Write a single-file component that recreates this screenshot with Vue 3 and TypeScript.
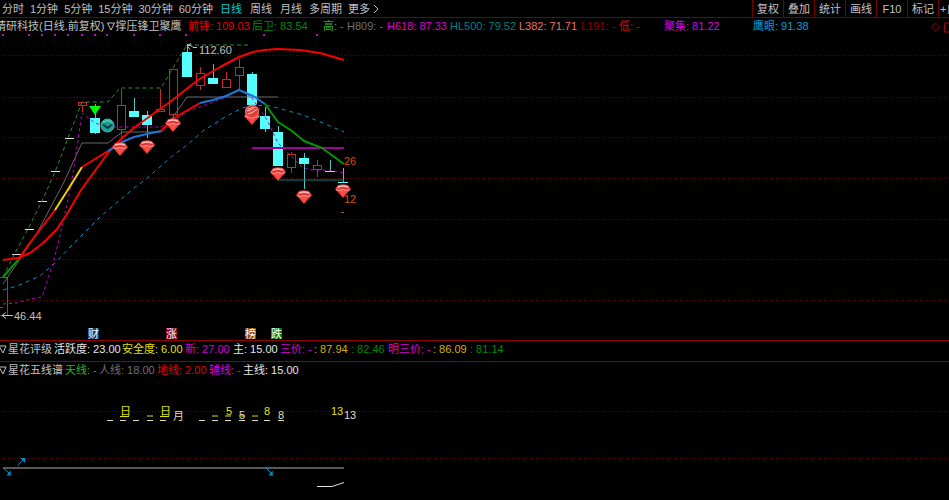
<script setup lang="ts">
interface Readout { label: string; value: string; tone: string }
interface Candle { x: number; top: number; bottom: number; high: number; low: number; up: boolean }
interface Trace { points: string; kind: string }

const periods: string[] = ['分时', '1分钟', '5分钟', '15分钟', '30分钟', '60分钟', '日线', '周线', '月线', '多周期']
const tools: string[] = ['复权', '叠加', '统计', '画线', 'F10', '标记', '+自']

const mainReadouts: Readout[] = [
  { label: '前锋:', value: '109.03', tone: 'red' },
  { label: '后卫:', value: '83.54', tone: 'green' },
  { label: '高:', value: '-', tone: 'leaf' },
  { label: 'H809:', value: '-', tone: 'gray' },
  { label: 'H618:', value: '87.33', tone: 'magenta' },
  { label: 'HL500:', value: '79.52', tone: 'teal' },
  { label: 'L382:', value: '71.71', tone: 'salmon' },
  { label: 'L191:', value: '-', tone: 'maroon' },
  { label: '低:', value: '-', tone: 'red' },
  { label: '聚集:', value: '81.22', tone: 'magenta' },
  { label: '鹰眼:', value: '91.38', tone: 'sky' },
]
const ratingReadouts: Readout[] = [
  { label: '活跃度:', value: '23.00', tone: 'white' },
  { label: '安全度:', value: '6.00', tone: 'yellow' },
  { label: '新:', value: '27.00', tone: 'magenta' },
  { label: '主:', value: '15.00', tone: 'white' },
  { label: '三价:', value: '-', tone: 'magenta' },
  { label: ':', value: '87.94', tone: 'gold' },
  { label: ':', value: '82.46', tone: 'green' },
  { label: '明三价:', value: '-', tone: 'magenta' },
  { label: ':', value: '86.09', tone: 'gold' },
  { label: ':', value: '81.14', tone: 'green' },
]
const staffReadouts: Readout[] = [
  { label: '天线:', value: '-', tone: 'leaf' },
  { label: '人线:', value: '18.00', tone: 'gray' },
  { label: '地线:', value: '2.00', tone: 'red' },
  { label: '辅线:', value: '-', tone: 'magenta' },
  { label: '主线:', value: '15.00', tone: 'white' },
]

const gridRows: number[] = [55, 97, 137, 178, 219, 259, 300]
const markers: number[] = [3, 29, 42, 55, 68, 82, 95, 107, 134, 160, 186, 264, 317]
const dojis: [number, number][] = [[16, 254], [29, 229], [42, 201], [55, 171], [69, 138]]

const c = (x: number, top: number, bottom: number, high: number, low: number, up = false): Candle =>
  ({ x, top, bottom, high, low, up })
const candles: Candle[] = [
  c(82, 102, 105, 102, 112, true),
  c(95, 118, 133, 104, 134),
  c(121, 105, 129, 89, 140, true),
  c(134, 111, 117, 98, 117),
  c(147, 115, 125, 111, 138),
  c(160, 109, 111, 89, 111, true),
  c(173, 69, 114, 69, 118, true),
  c(187, 52, 77, 44, 77),
  c(200, 73, 85, 67, 90, true),
  c(213, 78, 84, 64, 84),
  c(226, 79, 87, 72, 87, true),
  c(239, 67, 75, 59, 90, true),
  c(252, 74, 105, 72, 105),
  c(265, 116, 129, 107, 132),
  c(278, 132, 166, 126, 166),
  c(291, 154, 167, 152, 173, true),
  c(304, 158, 164, 153, 189),
  c(317, 165, 169, 160, 177, true),
  c(330, 171, 172, 160, 172),
  c(343, 182, 183, 168, 183),
]

const traces: Trace[] = [
  { kind: 'band', points: '3,277 15,253 29,227 42,201 55,172 68,138 82,102 108,102 120,88 161,88 173,68 187,45 251,45' },
  { kind: 'cyan', points: '3,290 17,286 40,276 55,263 72,245 100,217 134,188 145,180 170,158 187,145 203,131 225,117 242,108 254,105 270,106 303,115 323,123 344,132' },
  { kind: 'mid', points: '3,284 20,259 37,233 63,184 82,143 108,143 122,132 161,132 173,117 187,97 278,97' },
  { kind: 'purple', points: '3,304 17,303 30,299 42,297 54,260 63,223 72,180 82,113 95,123 107,127 160,127 173,122 186,112 200,107 225,98 239,89 252,98 267,120 278,143 292,157 303,168 313,170 330,170 344,173' },
  { kind: 'level', points: '252,148 344,148' },
  { kind: 'floor', points: '278,180 344,180' },
  { kind: 'thick up', points: '3,260 18,258 30,253 43,243 57,229 67,214 81,190 108,153 122,138 135,127 160,109 170,102 198,80 220,67 239,57 253,52 265,50 277,49 300,50 320,53 344,60' },
  { kind: 'thick down', points: '3,277 18,260' },
  { kind: 'thick up', points: '18,260 29,244 42,227 55,210' },
  { kind: 'thick warn', points: '55,210 69,188 82,167' },
  { kind: 'thick up', points: '82,167 95,159 108,151' },
  { kind: 'thick calm', points: '108,151 122,142 134,137 147,134 161,131' },
  { kind: 'thick up', points: '161,131 173,119 186,111 200,103' },
  { kind: 'thick calm', points: '200,103 213,100 226,96 239,90 253,96 265,104' },
  { kind: 'thick down', points: '265,104 278,122 292,131 304,141 322,148 333,156 344,164' },
]

const gems: [number, number][] = [[120, 142], [147, 140], [173, 118], [252, 111], [278, 167], [304, 190], [343, 184]]
const tags: { x: number; text: string; fill: string }[] = [
  { x: 88, text: '财', fill: '#123c70' },
  { x: 166, text: '涨', fill: '#8c0000' },
  { x: 245, text: '榜', fill: '#8a4008' },
  { x: 271, text: '跌', fill: '#088008' },
]

const whiteDashes: number[] = [107, 120, 133, 147, 160, 199, 212, 225, 239, 252, 264, 278]
const yellowDashes: number[] = [147, 212, 225, 239, 252]
const notes: { x: number; y: number; text: string; tone: string }[] = [
  { x: 120, y: 415, text: '日', tone: 'yellow' },
  { x: 160, y: 415, text: '日', tone: 'yellow' },
  { x: 173, y: 420, text: '月', tone: 'cream' },
  { x: 226, y: 415, text: '5', tone: 'yellow' },
  { x: 239, y: 419, text: '5', tone: 'cream' },
  { x: 264, y: 415, text: '8', tone: 'yellow' },
  { x: 278, y: 419, text: '8', tone: 'cream' },
  { x: 331, y: 415, text: '13', tone: 'yellow' },
  { x: 344, y: 419, text: '13', tone: 'cream' },
]
</script>

<template>
  <main class="terminal">
    <header class="toolbar">
      <nav class="periods">
        <button v-for="p in periods" :key="p" type="button" :class="{ day: p.length === 2 && p.endsWith('线'), current: p === '日线' }">{{ p }}</button>
        <button type="button" class="more">更多
          <svg width="6" height="10" viewBox="0 0 6 10"><path d="M1 1 5 5 1 9" /></svg>
        </button>
      </nav>
      <div class="tools">
        <button v-for="t in tools" :key="t" type="button">{{ t }}</button>
      </div>
    </header>

    <section class="pane">
      <div class="readouts main-row">
        <h1>精研科技(日线.前复权)
          <svg class="drop" width="8" height="9" viewBox="0 0 8 9"><path d="M.5 1h7L4 8z" /></svg>撑压锋卫聚鹰</h1>
        <span v-for="r in mainReadouts" :key="r.label" :class="r.tone">{{ r.label }} {{ r.value }}</span>
        <svg class="corner" width="18" height="12" viewBox="0 0 18 12"><path d="M4.500 2 8.500 6l-4 4-4-4zM18 2h-4.500v9H18" /></svg>
      </div>
      <svg class="chart price" width="100%" height="306">
        <g transform="translate(0 -34)">
          <line v-for="y in gridRows" :key="y" class="grid" x1="2" :y1="y + 0.5" x2="100%" :y2="y + 0.5" />
          <rect v-for="x in markers" :key="x" class="marker" :x="x - 1" y="34" width="2" height="2" />
          <path class="rise" d="M0 277.500H7.500V315.500H0M0 307.500H3" />
          <line v-for="d in dojis" :key="d[0]" class="doji" :x1="d[0] - 4" :x2="d[0] + 5" :y1="d[1] + 0.5" :y2="d[1] + 0.5" />
          <g v-for="k in candles" :key="k.x" :class="k.up ? 'rise' : 'fall'">
            <line :x1="k.x + 0.5" :x2="k.x + 0.5" :y1="k.high" :y2="k.top" />
            <line :x1="k.x + 0.5" :x2="k.x + 0.5" :y1="k.bottom" :y2="k.low" />
            <rect v-if="k.up" :x="k.x - 4 + 0.5" :y="k.top + 0.5" width="8" :height="k.bottom - k.top" />
            <rect v-else :x="k.x - 5" :y="k.top" width="10" :height="k.bottom - k.top" />
          </g>
          <polyline v-for="(t, i) in traces" :key="i" :class="['trace', t.kind]" :points="t.points" />
          <path class="signal" d="M89 106h12l-6 9z" />
          <g class="orb">
            <circle cx="107.500" cy="125.500" r="6.500" />
            <path class="shine" d="M103 122.500q4.500-3.500 9 0" />
            <path d="M103 124.500l4.500 3.500 4.500-3.500" />
          </g>
          <g v-for="g in gems" :key="g[0]" :transform="`translate(${g[0]} ${g[1]})`">
            <path class="gem" d="M-5 1Q0-.5 5 1L8 5 0 14-8 5z" />
            <path class="facet" d="M-4 6.500 0 13 4 6.500z" />
            <path class="glint" d="M-6 4 -4.500 2Q0 .500 4.500 2L6 4 4 3.500Q0 2-4 3.500z" />
            <path class="edge" d="M-7 5.500 -4 6.500Q0 4.500 4 6.500L7 5.500" />
          </g>
          <g class="ball">
            <circle cx="252" cy="111.500" r="6.500" />
            <path d="M247 111q5-1 8-4M248 114q5-1 9-5M247.500 109q3 0 5-2" />
          </g>
          <path class="pointer" d="M187 45.500h4l2 2h4M187 45.500l4-2M187 45.500l3 4" />
          <text class="price-label" x="199" y="54">112.60</text>
          <path class="pointer" d="M2 315.500H13M2 315.500l4-3M2 315.500l4 3" />
          <text class="price-label" x="14" y="320">46.44</text>
          <text class="target" x="344" y="165">26</text>
          <text class="target" x="344" y="203">12</text>
          <line class="tick" x1="341" x2="344" y1="212.500" y2="212.500" />
          <g v-for="t in tags" :key="t.text">
            <rect :x="t.x" y="328" width="11" height="11" :fill="t.fill" />
            <text class="tag" :x="t.x" y="338">{{ t.text }}</text>
          </g>
        </g>
      </svg>
    </section>

    <section class="pane ruled">
      <div class="readouts rating-row">
        <h2><svg class="drop" width="8" height="9" viewBox="0 0 8 9"><path d="M-1 1h7L3 8z" /></svg>星花评级</h2>
        <span v-for="(r, i) in ratingReadouts" :key="i" :class="r.tone">{{ r.label }} {{ r.value }}</span>
      </div>
    </section>

    <section class="pane ruled last">
      <div class="readouts staff-row">
        <h2><svg class="drop" width="8" height="9" viewBox="0 0 8 9"><path d="M-1 1h7L3 8z" /></svg>星花五线谱</h2>
        <span v-for="r in staffReadouts" :key="r.label" :class="r.tone">{{ r.label }} {{ r.value }}</span>
      </div>
      <svg class="chart" width="100%" height="122">
        <g transform="translate(0 -378)">
          <line class="grid" x1="2" y1="411.500" x2="100%" y2="411.500" />
          <line class="grid" x1="2" y1="458.500" x2="100%" y2="458.500" />
          <line v-for="x in whiteDashes" :key="x" class="dash cream" :x1="x" :x2="x + 6" y1="420.500" y2="420.500" />
          <line v-for="x in yellowDashes" :key="x" class="dash yellow" :x1="x" :x2="x + 6" y1="416" y2="416" />
          <path class="dash yellow" d="M120 416.500h9M160 416.500h9" />
          <text v-for="n in notes" :key="n.text + n.x" :class="['note', n.tone]" :x="n.x" :y="n.y">{{ n.text }}</text>
          <line class="base" x1="3" x2="344" y1="468" y2="468" />
          <polyline class="tail" points="317,486.500 332,486.500 344,482.500" />
          <g class="arrow">
            <path d="M3 468 9 473M18 465 23 460M266 468 271 473" />
            <path class="head" d="M11 475.500H6.500L10.500 470.500zM25.500 458H20.500L25 463zM273 475.500H268.500L272.500 470.500z" />
          </g>
        </g>
      </svg>
    </section>
  </main>
</template>

<style>
body {
  margin: 0;
  background: #000;
}
</style>

<style scoped>
.terminal {
  display: flex;
  flex-direction: column;
  min-height: 100vh;
  overflow: hidden;
  background: #000;
  color: #c0c0c0;
  font-family: "Liberation Sans", "Noto Sans CJK SC", sans-serif;
  font-size: 11px;
  line-height: 16px;
}
button {
  margin: 0;
  padding: 0;
  border: 0;
  background: none;
  color: inherit;
  font: inherit;
  white-space: nowrap;
  cursor: pointer;
}
.toolbar {
  display: flex;
  justify-content: space-between;
  height: 17px;
  border-bottom: 1px solid #780000;
  overflow: hidden;
}
.periods {
  display: flex;
  gap: 6px;
  padding-left: 2px;
}
.periods .day {
  padding: 0 1px;
}
.periods .current {
  color: #00c8d0;
}
.more {
  display: flex;
  align-items: center;
  gap: 3px;
}
.more svg path,
.drop path {
  fill: none;
  stroke: #c0c0c0;
}
.tools {
  display: flex;
}
.tools button {
  width: 31px;
  border-left: 1px solid #780000;
  text-align: center;
}
.tools button:last-child {
  width: 11px;
  padding-left: 1px;
  text-align: left;
}
.readouts {
  display: grid;
  position: relative;
  height: 16px;
  overflow: hidden;
  white-space: nowrap;
}
.main-row {
  grid-template-columns: 188px 64px 71px 24px 40px 63px 69px 62px 38px 45px 89px auto;
}
.rating-row {
  grid-template-columns: 54px 68px 63px 48px 47px 34px 37px 37px 45px 37px auto;
  height: 20px;
}
.staff-row {
  grid-template-columns: 65px 34px 58px 52px 34px auto;
}
h1,
h2 {
  margin: 0;
  font-size: 11px;
  font-weight: 400;
}
h1 {
  margin-left: -5px;
}
.drop {
  vertical-align: -1px;
}
.corner {
  position: absolute;
  right: 0;
  top: 3px;
}
.corner path {
  fill: none;
  stroke: #a00000;
}
.ruled {
  border-top: 1px solid #900000;
}
.chart {
  display: block;
}
.last {
  flex: 1;
}

.red { color: #e80000; }
.green { color: #008a00; }
.leaf { color: #30b030; }
.gray { color: #707070; }
.magenta { color: #d800d8; }
.teal { color: #008080; }
.salmon { color: #f07070; }
.maroon { color: #900000; }
.sky { color: #00a0d8; }
.white { color: #e8e8e8; }
.yellow { color: #e0e000; }
.gold { color: #d8b000; }
.cream { color: #e0dcc0; }

.grid {
  stroke: #700000;
  stroke-dasharray: 1 2;
}
.marker { fill: #d000d0; }
.rise line,
.rise rect,
path.rise {
  fill: none;
  stroke: #c82828;
}
.fall line { stroke: #48c8c8; }
.fall rect { fill: #54ffff; }
.doji { stroke: #e0e0e0; }
.trace {
  fill: none;
  stroke-linejoin: round;
}
.band {
  stroke: #289028;
  stroke-dasharray: 4 3;
}
.cyan {
  stroke: #0090c8;
  stroke-dasharray: 4 4;
}
.mid { stroke: #686868; }
.purple {
  stroke: #c000c0;
  stroke-dasharray: 3 3;
}
.level {
  stroke: #a000a0;
  stroke-width: 2;
}
.floor { stroke: #008080; }
.thick { stroke-width: 2; }
.up { stroke: #f80000; }
.down { stroke: #009800; }
.warn { stroke: #f0d000; }
.calm { stroke: #1878d8; }
.signal { fill: #00f800; }
.orb circle {
  fill: #18a090;
  stroke: #30c0a8;
}
.orb path {
  fill: none;
  stroke: #083840;
  stroke-width: 2;
}
.orb .shine {
  stroke: #80e0c8;
  stroke-width: 1;
}
.gem { fill: #e03838; }
.facet { fill: #ff5048; }
.glint { fill: #ffc0b8; }
.edge {
  fill: none;
  stroke: #ffa098;
}
.ball circle {
  fill: #e04038;
  stroke: #ff8078;
}
.ball path {
  fill: none;
  stroke: #ffc0b8;
}
.pointer {
  fill: none;
  stroke: #c0c0c0;
}
.price-label { fill: #c0c0c0; }
.target { fill: #e04800; }
.tick { stroke: #b05038; }
.tag { fill: #fff; }
.dash,
.note {
  fill: currentColor;
  stroke: none;
}
.dash { stroke: currentColor; }
.base {
  stroke: #585858;
  stroke-width: 2;
}
.tail {
  fill: none;
  stroke: #e0e0e0;
}
.arrow path { stroke: #0090c0; }
.arrow .head {
  fill: #0090c0;
  stroke: none;
}
</style>
